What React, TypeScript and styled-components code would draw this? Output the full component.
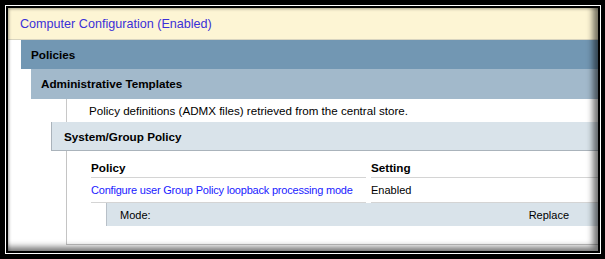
import styled, { createGlobalStyle } from "styled-components";

const GlobalStyle = createGlobalStyle`
  html, body {
    margin: 0;
    padding: 0;
    background: #000;
  }
  body {
    font-family: "Liberation Sans", Arial, sans-serif;
    font-size: 11px;
    color: #000;
  }
`

const Frame = styled.div`
  width: 605px;
  height: 259px;
  box-sizing: border-box;
  background: #000;
  padding: 5px 4px 5px 5px;
  display: flex;
`

const Mat = styled.div`
  flex: 1;
  display: flex;
  border: 1px solid #fff;
`

const Panel = styled.div`
  flex: 1;
  position: relative;
  overflow: hidden;
  border: 2px solid #000;
  background: #fff;
  display: flex;
  flex-direction: column;

  &::after {
    content: "";
    position: absolute;
    inset: 0;
    pointer-events: none;
    box-shadow:
      inset -7px -6px 6px -2px rgba(0, 0, 0, 0.55),
      inset 2px 2px 3px -1px rgba(0, 0, 0, 0.35);
  }
`

const Header = styled.div`
  height: 31px;
  flex-shrink: 0;
  display: flex;
  align-items: center;
  padding-left: 12px;
  background: #fdf5d4;
  border-bottom: 1px solid #d8d4c0;
  color: #3b30d8;
  font-size: 12.6px;
`

const Section = styled.div<{ $indent: number }>`
  margin-left: ${p => p.$indent}px;
  display: flex;
  flex-direction: column;
`

const Bar = styled.div<{ $bg: string; $h: number; $pad: number; $edge?: string }>`
  height: ${p => p.$h}px;
  flex-shrink: 0;
  display: flex;
  align-items: center;
  padding-left: ${p => p.$pad}px;
  background: ${p => p.$bg};
  font-weight: bold;
  font-size: 11.7px;
  box-sizing: border-box;
  border-left: 1px solid ${p => p.$edge || p.$bg};
  border-bottom: 1px solid ${p => p.$edge || p.$bg};
`

const InfoRow = styled.div`
  height: 23px;
  margin-left: 35px;
  display: flex;
  align-items: center;
  padding-left: 22px;
  border-left: 1px solid #c8c8c8;
  font-size: 11.6px;
`

const Body = styled.div`
  margin-left: 15px;
  padding: 6px 0 18px 24px;
  border-left: 1px solid #c4c4c4;
  border-bottom: 1px solid #c4c4c4;
`

const Table = styled.div`
  display: grid;
  grid-template-columns: 275px 1fr;
  column-gap: 5px;
`

const HeadCell = styled.div`
  height: 20px;
  display: flex;
  align-items: center;
  font-weight: bold;
  font-size: 11.7px;
  border-bottom: 1px solid #d4d4d4;
`

const Cell = styled.div<{ $link?: boolean }>`
  height: 24px;
  display: flex;
  align-items: center;
  color: ${p => (p.$link ? "#1a1aff" : "#000")};
  letter-spacing: ${p => (p.$link ? "-0.2px" : "0")};
  border-bottom: 1px solid #d4d4d4;
`

const SubRow = styled.div`
  margin-left: 15px;
  height: 23px;
  display: flex;
  align-items: center;
  justify-content: space-between;
  padding: 0 29px 0 13px;
  background: #d9e3ea;
  border-left: 1px solid #b8c0c8;
`

export default function App() {
  return (
    <>
      <GlobalStyle />
      <Frame>
        <Mat>
          <Panel>
            <Header>Computer Configuration (Enabled)</Header>
            <Section $indent={13}>
              <Bar $bg="#7297b3" $h={29} $pad={9}>Policies</Bar>
              <Section $indent={10}>
                <Bar $bg="#a2b9cb" $h={30} $pad={9}>Administrative Templates</Bar>
                <InfoRow>Policy definitions (ADMX files) retrieved from the central store.</InfoRow>
                <Section $indent={20}>
                  <Bar $bg="#d9e3ea" $h={29} $pad={12} $edge="#aab3bb">System/Group Policy</Bar>
                  <Body>
                    <Table>
                      <HeadCell>Policy</HeadCell>
                      <HeadCell>Setting</HeadCell>
                      <Cell $link>Configure user Group Policy loopback processing mode</Cell>
                      <Cell>Enabled</Cell>
                    </Table>
                    <SubRow>
                      <span>Mode:</span>
                      <span>Replace</span>
                    </SubRow>
                  </Body>
                </Section>
              </Section>
            </Section>
          </Panel>
        </Mat>
      </Frame>
    </>
  );
}
